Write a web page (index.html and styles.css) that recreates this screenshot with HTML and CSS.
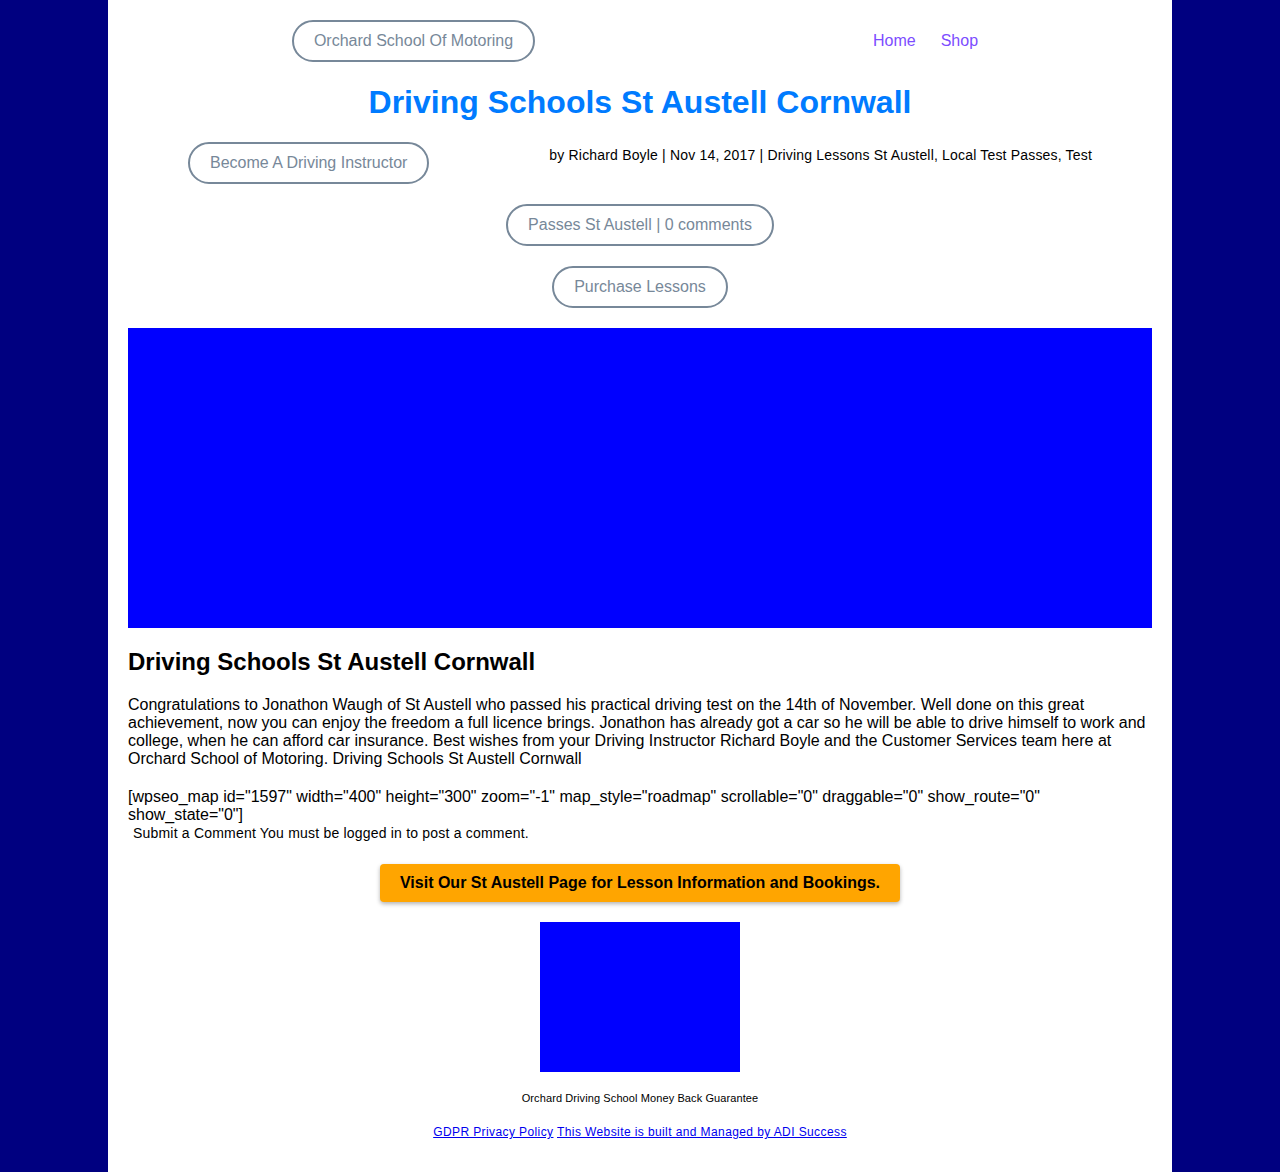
FILE: index.html
```html
<!DOCTYPE html>
<html lang="en">
<head>
<meta charset="utf-8">
<title>Driving Schools St Austell Cornwall</title>
<link rel="stylesheet" href="styles.css">
</head>
<body>
<div class="page">
  <header class="site-header">
    <a class="pill" href="#">Orchard School Of Motoring</a>
    <nav class="nav">
      <a href="#">Home</a>
      <a href="#">Shop</a>
    </nav>
  </header>

  <h1 class="title">Driving Schools St Austell Cornwall</h1>

  <div class="meta-row">
    <a class="pill" href="#">Become A Driving Instructor</a>
    <p class="meta">by Richard Boyle | Nov 14, 2017 | Driving Lessons St Austell, Local Test Passes, Test</p>
  </div>

  <div class="center-row">
    <a class="pill" href="#">Passes St Austell | 0 comments</a>
  </div>

  <div class="center-row">
    <a class="pill" href="#">Purchase Lessons</a>
  </div>

  <div class="hero"></div>

  <article class="post">
    <h2 class="post-title">Driving Schools St Austell Cornwall</h2>
    <p>Congratulations to Jonathon Waugh of St Austell who passed his practical driving test on the 14th of November. Well done on this great achievement, now you can enjoy the freedom a full licence brings. Jonathon has already got a car so he will be able to drive himself to work and college, when he can afford car insurance. Best wishes from your Driving Instructor Richard Boyle and the Customer Services team here at Orchard School of Motoring. Driving Schools St Austell Cornwall</p>
    <p class="shortcode">[wpseo_map id="1597" width="400" height="300" zoom="-1" map_style="roadmap" scrollable="0" draggable="0" show_route="0" show_state="0"]</p>
    <p class="comment-note">Submit a Comment You must be logged in to post a comment.</p>
  </article>

  <div class="cta-wrap">
    <a class="cta" href="#">Visit Our St Austell Page for Lesson Information and Bookings.</a>
  </div>

  <div class="guarantee"></div>
  <p class="guarantee-text">Orchard Driving School Money Back Guarantee</p>

  <footer class="footer">
    <a href="#">GDPR Privacy Policy</a> <a href="#">This Website is built and Managed by ADI Success</a>
  </footer>
</div>
</body>
</html>
```

FILE: styles.css
```css
html, body {
  margin: 0;
  padding: 0;
}

body {
  background: #000080;
  font-family: "Liberation Sans", Arial, sans-serif;
  color: #000;
}

.page {
  width: 1024px;
  margin: 0 auto;
  background: #fff;
  padding: 20px 20px 30px;
  min-height: 1122px;
}

.pill {
  display: inline-block;
  box-sizing: border-box;
  height: 42px;
  line-height: 38px;
  padding: 0 20px;
  border: 2px solid #778899;
  border-radius: 21px;
  color: #778899;
  font-size: 16px;
  text-decoration: none;
  white-space: nowrap;
}

.site-header {
  display: flex;
  justify-content: space-around;
  align-items: center;
}

.nav {
  display: flex;
  gap: 5px;
}

.nav a {
  padding: 0 10px;
  color: #7c4dff;
  font-size: 16px;
  text-decoration: none;
  line-height: 20px;
}

.title {
  margin: 20px 0;
  text-align: center;
  color: #007bff;
  font-size: 32px;
  line-height: 40px;
  font-weight: bold;
}

.meta-row {
  display: flex;
  justify-content: space-around;
  align-items: flex-start;
}

.meta {
  margin: 5px 0 0;
  font-size: 14px;
  line-height: 16px;
  letter-spacing: 0.18px;
}

.center-row {
  display: flex;
  justify-content: center;
  margin-top: 20px;
}

.hero {
  margin-top: 20px;
  height: 300px;
  background: #0000ff;
}

.post-title {
  margin: 20px 0;
  font-size: 24px;
  line-height: 28px;
  font-weight: bold;
}

.post p {
  margin: 0 0 20px;
  font-size: 16px;
  line-height: 18px;
}

.post .shortcode {
  margin-bottom: 0;
}

.post .comment-note {
  margin: 0;
  padding-left: 5px;
  font-size: 14px;
  line-height: 18px;
  letter-spacing: 0.2px;
}

.cta-wrap {
  display: flex;
  justify-content: center;
  margin-top: 22px;
}

.cta {
  display: block;
  box-sizing: border-box;
  width: 520px;
  height: 38px;
  line-height: 38px;
  text-align: center;
  background: #ffa500;
  color: #000;
  font-weight: bold;
  font-size: 16px;
  border-radius: 4px;
  box-shadow: 0 2px 4px rgba(0, 0, 0, 0.3);
  text-decoration: none;
}

.guarantee {
  width: 200px;
  height: 150px;
  margin: 20px auto 0;
  background: #0000ff;
}

.guarantee-text {
  margin: 20px 0 0;
  text-align: center;
  font-size: 11px;
  line-height: 13px;
  letter-spacing: 0.1px;
}

.footer {
  margin-top: 20px;
  text-align: center;
  font-size: 12px;
  line-height: 14px;
  letter-spacing: 0.4px;
}

.footer a {
  color: #0000ee;
  text-decoration: underline;
}
```
